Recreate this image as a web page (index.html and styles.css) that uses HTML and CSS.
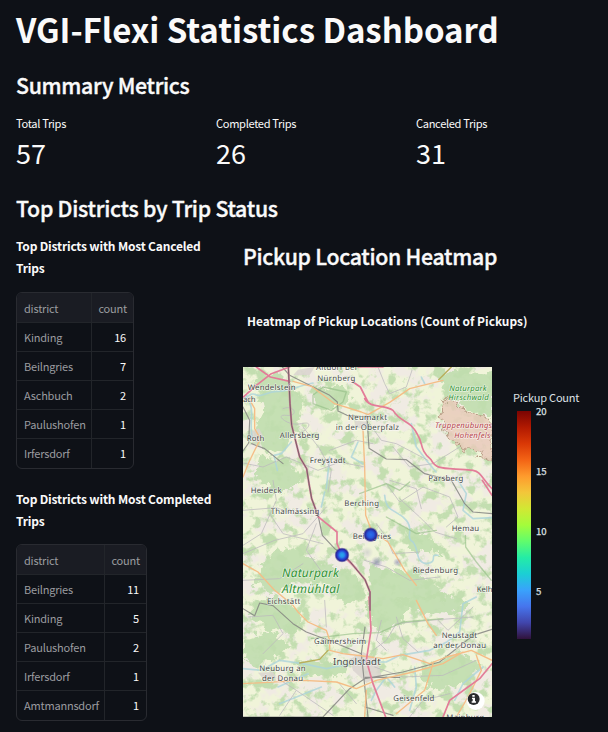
FILE: index.html
```html
<!DOCTYPE html>
<html lang="en">
<head>
<meta charset="utf-8">
<title>VGI-Flexi Statistics Dashboard</title>
<link rel="stylesheet" href="styles.css">
</head>
<body>
<main class="dashboard">
  <h1>VGI-Flexi Statistics Dashboard</h1>
  <h2 class="summary-title">Summary Metrics</h2>
  <section class="metrics">
    <div><div class="metric-label">Total Trips</div><div class="metric-value">57</div></div>
    <div><div class="metric-label">Completed Trips</div><div class="metric-value">26</div></div>
    <div><div class="metric-label">Canceled Trips</div><div class="metric-value">31</div></div>
  </section>
  <h2 class="district-title">Top Districts by Trip Status</h2>
  <div class="columns">
    <section class="tables">
      <h3>Top Districts with Most Canceled<br>Trips</h3>
      <div class="table canceled">
        <div class="row head"><span>district</span><span>count</span></div>
        <div class="row"><span>Kinding</span><span>16</span></div>
        <div class="row"><span>Beilngries</span><span>7</span></div>
        <div class="row"><span>Aschbuch</span><span>2</span></div>
        <div class="row"><span>Paulushofen</span><span>1</span></div>
        <div class="row"><span>Irfersdorf</span><span>1</span></div>
      </div>
      <h3 class="completed-title">Top Districts with Most Completed<br>Trips</h3>
      <div class="table completed">
        <div class="row head"><span>district</span><span>count</span></div>
        <div class="row"><span>Beilngries</span><span>11</span></div>
        <div class="row"><span>Kinding</span><span>5</span></div>
        <div class="row"><span>Paulushofen</span><span>2</span></div>
        <div class="row"><span>Irfersdorf</span><span>1</span></div>
        <div class="row"><span>Amtmannsdorf</span><span>1</span></div>
      </div>
    </section>
    <section class="heatmap">
      <h2 class="heatmap-title">Pickup Location Heatmap</h2>
      <div class="chart-title">Heatmap of Pickup Locations (Count of Pickups)</div>
      <div class="chart">
        <svg class="map" viewBox="0 0 747 1050">
          <defs>
            <filter id="woods" x="0" y="0" width="100%" height="100%" color-interpolation-filters="sRGB">
              <feTurbulence type="fractalNoise" baseFrequency="0.03" numOctaves="4" seed="8"/>
              <feColorMatrix values="0 0 0 0 .765  0 0 0 0 .87  0 0 0 0 .69  6 0 0 0 -3.05"/>
            </filter>
            <filter id="fields" x="0" y="0" width="100%" height="100%" color-interpolation-filters="sRGB">
              <feTurbulence type="fractalNoise" baseFrequency="0.016" numOctaves="4" seed="31"/>
              <feColorMatrix values="0 0 0 0 .94  0 0 0 0 .92  0 0 0 0 .89  8 0 0 0 -3.8"/>
            </filter>
            <filter id="rough" x="-10%" y="-10%" width="120%" height="120%">
              <feTurbulence type="fractalNoise" baseFrequency="0.045" numOctaves="3" seed="4"/>
              <feDisplacementMap in="SourceGraphic" scale="42" xChannelSelector="R" yChannelSelector="G"/>
            </filter>
            <radialGradient id="hot"><stop offset="0" stop-color="#28a8ef"/><stop offset=".3" stop-color="#288eea"/><stop offset=".55" stop-color="#2646d8"/><stop offset=".78" stop-color="#292799"/><stop offset="1" stop-color="#302080" stop-opacity="0"/></radialGradient>
            <radialGradient id="warm"><stop offset="0" stop-color="#2c70ea"/><stop offset=".4" stop-color="#2859df"/><stop offset=".75" stop-color="#292999"/><stop offset="1" stop-color="#302080" stop-opacity="0"/></radialGradient>
            <radialGradient id="faint"><stop offset="0" stop-color="#6860a8" stop-opacity=".5"/><stop offset="1" stop-color="#6860a8" stop-opacity="0"/></radialGradient>
          </defs>
          <rect width="747" height="1050" fill="#f0f4d9"/>
          <rect width="747" height="1050" filter="url(#fields)"/>
          <rect width="747" height="1050" filter="url(#woods)"/>
          <g class="forest" filter="url(#rough)">
            <path d="M35 35L110 20 180 90 165 175 125 250 70 260 30 200 65 130Z"/>
            <path d="M55 265L140 280 175 340 110 380 35 330Z"/>
            <path d="M205 70L300 60 330 100 265 130 210 120Z"/>
            <path d="M595 10L750 20V150L690 140 600 80Z"/>
            <path d="M80 560L145 535 220 580 340 625 365 690 305 715 255 655 165 640 105 680 35 655Z"/>
            <path d="M35 700L115 690 180 735 155 800 75 790 20 745Z"/>
            <path d="M5 815L80 790 145 835 100 870 40 900 0 880Z"/>
            <path d="M385 595L480 615 585 650 610 700 510 690 475 770 405 800 370 745Z"/>
            <path d="M560 890L655 855 715 900 670 950 565 965 525 930Z"/>
            <path d="M150 883L265 885 330 900 275 930 190 925Z"/>
            <path d="M480 480L550 500 610 560 500 550Z"/>
            <path d="M455 695L600 680 690 700 650 735 540 745Z"/>
          </g>
          <g filter="url(#rough)"><path d="M606 92L642 115 680 140 750 162V280L655 240 610 207 595 150Z" fill="#e9c9b9" fill-opacity=".8" stroke="#b59b83" stroke-width="3"/></g>
          <g class="towns"><path d="M22 194L48 184 60 206 42 228 22 216Z"/><path d="M335 160L372 165 375 182 335 184Z"/><path d="M320 877L360 855 403 880 415 925 370 948 330 910Z"/><path d="M165 8L215 0 200 24 150 25Z"/><path d="M45 917L90 915 100 932 65 940Z"/></g>
          <g class="water">
            <path d="M0 96C18 88 25 75 40 84S70 72 105 73 150 60 210 48 M10 85C40 125 15 170 29 215 M145 225L115 260 93 265 103 310 M245 375L235 420 M260 270L250 365 M345 225L325 270 359 290 M505 170L520 240 550 280 579 315"/>
            <path d="M425 385C430 440 460 425 490 460 515 490 485 510 510 525 530 550 515 585 550 590 590 585 555 560 585 565 590 600 555 612 M500 405L520 430 499 485 M235 610L280 570 336 550 375 530 410 532 460 540 M0 705L45 720 60 704 150 680 170 655 250 640 M610 600L650 635 720 650"/>
            <path d="M0 905L55 910 110 880 180 890 250 905 350 885 430 885 470 865 560 850 610 826 650 795 660 710 700 690 M105 960L195 920M110 1010L235 960M515 900L520 960 500 1030M635 1000L660 950 720 900"/>
            <path d="M385 1000L400 970 430 930 455 960 M645 340L670 380 660 430 690 455 747 452 M535 30L545 50"/>
          </g>
          <g class="minor">
            <path d="M0 288L60 300 130 270 225 310 290 285 365 300 M180 180L230 245 265 310 255 375 M405 0L425 50 440 80 490 60 507 10 M380 170L415 220 460 230 555 280 M0 430L100 422 150 440 215 438 M90 340L100 400 55 500 0 535"/>
            <path d="M260 250L340 220 390 230 M450 240L500 300 570 290 650 240 M430 350L470 405 540 360 620 390 645 450 610 480 M470 395L530 450 575 495 640 515 M400 470L430 510 450 560 530 555"/>
            <path d="M0 560L95 520 180 500 250 420 M80 440L120 500 240 530 M220 470L190 550 240 620 M365 580L430 600 500 640 590 630 M440 340L520 365 535 425 M0 640L110 635 180 590 M245 700L250 780 M110 1045L160 970 105 935M160 970L270 1045M285 945L340 1010"/>
            <path d="M15 750L90 745 120 800 60 860M390 850L430 820 460 770 560 760 690 750M460 750L480 815 525 855M395 900L480 930 600 925 700 880M585 760L615 790 690 720M500 1050L540 1000 620 980M415 760L400 820 430 850M120 125C155 110 170 150 130 145S135 180 175 170 195 190 170 198"/>
          </g>
          <g class="green-line"><path d="M350 380L430 350 470 370 500 345 M430 450L520 500 580 490 M210 85L240 60 310 75 300 105 265 130 210 110Z M205 815L330 800 410 797 480 765 600 755 M667 505L668 540 700 585 745 640"/></g>
          <g class="rail">
            <path d="M118 0L140 25 260 85 283 105 285 132 312 145 372 150 378 244 430 276 490 278 545 320 625 340 665 410 690 435 747 440"/>
            <path d="M0 120L20 160 17 228 0 252M26 230L65 245 120 290M0 725L35 746 50 708 90 716 150 770 190 795 270 825 355 860 375 1050M355 860L366 780"/>
            <path d="M0 1050L240 1050 320 965 365 935 480 915 590 885 690 805 747 787M366 931H470M366 1020L450 1045M226 449L238 505 275 545 300 560"/>
          </g>
          <g class="secondary">
            <path d="M18 95L35 125 35 185 52 215 18 285 0 330M150 43L205 58 275 110 355 135 375 143 440 106 500 65 600 40 M360 190L365 300 368 445 385 490 435 525 485 610 520 655"/>
            <path d="M0 590L45 615 95 670 150 715 165 735 195 765 250 790 260 820 260 850 300 860 360 867 420 875 480 863 560 890 610 870 685 850 747 880M0 950L180 940 280 945 340 965 400 940 510 915 600 890 660 855M520 700L555 770 580 805M570 890L545 970 460 1040M370 970L365 1050M700 865L715 910 675 990 640 1050"/>
          </g>
          <path class="road-yellow" d="M170 888L230 877 255 850M587 38L625 0"/>
          <g class="primary">
            <path d="M0 91L40 55 85 20 140 0M40 0L82 30 140 43M330 45L352 60 375 105M345 0H420M365 95C380 125 425 112 450 130 475 170 500 155 525 205 540 230 530 250 564 278 580 310 600 302 690 310 715 314 720 340 747 365M225 449L250 469 282 495 282 530 297 564 340 605"/>
            <path d="M378 690L384 790 370 880 390 950 428 1050M600 1050L620 1000 675 960 710 935 747 890M718 340L747 385"/>
          </g>
          <path class="motorway" d="M136 0L141 110 146 175 170 270 191 305 198 350 206 395 226 449M297 560L321 584 366 638 381 675V730"/>
          <path class="motorway-core" d="M136 0L141 110 146 175 170 270 191 305 198 350 206 395 226 449M297 560L321 584 366 638 381 675V730"/>
          <g class="labels">
            <text x="219" y="10" textLength="122">Altdorf bei</text><text x="223" y="42" textLength="114">Nürnberg</text>
            <text x="14" y="68" textLength="144">Wendelstein</text><text x="0" y="106" textLength="38">ach</text>
            <text x="11" y="221" textLength="53">Roth</text><text x="110" y="214" textLength="119">Allersberg</text><text x="200" y="288" textLength="108">Freystadt</text>
            <text x="315" y="158" textLength="117">Neumarkt</text><text x="278" y="189" textLength="190">in der Oberpfalz</text><text x="556" y="342" textLength="105">Parsberg</text>
            <text x="23" y="379" textLength="93">Heideck</text><text x="83" y="442" textLength="146">Thalmässing</text><text x="304" y="417" textLength="104">Berching</text><text x="329" y="515" textLength="115">Beilngries</text>
            <text x="72" y="712" textLength="100">Eichstätt</text><text x="626" y="492" textLength="82">Hemau</text><text x="509" y="617" textLength="136">Riedenburg</text><text x="701" y="676" textLength="48">Kelh</text>
            <text x="213" y="830" textLength="156">Gaimersheim</text><text class="city" x="270" y="893" textLength="143">Ingolstadt</text><text x="49" y="913" textLength="139">Neuburg an</text><text x="57" y="943" textLength="123">der Donau</text>
            <text x="596" y="812" textLength="106">Neustadt</text><text x="571" y="844" textLength="158">an der Donau</text><text x="451" y="1001" textLength="123">Geisenfeld</text><text x="610" y="1059" textLength="113">Mainburg</text>
          </g>
          <g class="labels nature"><text x="619" y="71" textLength="112">Naturpark</text><text x="616" y="100" textLength="121">Hirschwald</text><text class="large" x="117" y="631" textLength="171">Naturpark</text><text class="large" x="117" y="677" textLength="172">Altmühltal</text></g>
          <g class="labels military"><text x="576" y="183" textLength="171">Truppenübungs</text><text x="634" y="212" textLength="108">Hohenfels</text></g>
          <circle cx="297" cy="564" r="23" fill="url(#hot)"/><circle cx="383" cy="503" r="23" fill="url(#warm)"/>
          <circle cx="401" cy="585" r="18" fill="url(#faint)"/><circle cx="463" cy="586" r="13" fill="url(#faint)"/><circle cx="373" cy="556" r="18" fill="url(#faint)" opacity=".4"/>
          <circle cx="698" cy="1002" r="27" fill="#fff"/><circle cx="692" cy="996" r="18" fill="#292b2d"/><path d="M687 992h9v11h3v4h-13v-4h3v-7h-2zM688 984h7v5h-7z" fill="#fff"/>
        </svg>
        <div class="legend">
          <div class="legend-title">Pickup Count</div>
          <div class="scale"><div class="colorbar"></div><div class="ticks"><span>20</span><span>15</span><span>10</span><span>5</span></div></div>
        </div>
      </div>
    </section>
  </div>
</main>
</body>
</html>
```
FILE: styles.css
```css
* { box-sizing: border-box; }
body { margin: 0; background: #0e1117; color: #fafafa; font-family: "Noto Sans CJK JP", "Noto Sans", sans-serif; overflow: hidden; }
.dashboard { width: 608px; height: 732px; padding: 9px 16px 0; overflow: hidden; }
h1, h2, h3 { margin: 0; white-space: nowrap; }
h1 { font-size: 33px; line-height: 40px; font-weight: 700; letter-spacing: -.05px; }
h2 { font-size: 21.3px; line-height: 30px; font-weight: 500; letter-spacing: -.31px; -webkit-text-stroke: .35px currentColor; }
.summary-title { margin-top: 21px; }
.metrics { display: grid; grid-template-columns: 200px 200px 1fr; margin-top: 13px; }
.metric-label { font-size: 11.1px; line-height: 20px; letter-spacing: -.33px; }
.metric-value { font-size: 27px; line-height: 38px; padding-top: 1px; }
.district-title { margin-top: 21px; letter-spacing: -.27px; }
.columns { display: flex; }
.tables { width: 227px; flex: none; padding-top: 12px; }
h3 { font-size: 12px; line-height: 21.5px; font-weight: 700; letter-spacing: -.19px; }
.table { width: 118px; height: 177px; border: 1px solid #292b31; border-radius: 6px; overflow: hidden; margin-top: 14px; }
.table.completed { width: 131px; margin-top: 13px; }
.completed-title { margin-top: 19px; }
.row { display: grid; grid-template-columns: minmax(0, 1fr) 42px; height: 29px; border-bottom: 1px solid #22252a; font-size: 11px; line-height: 28px; letter-spacing: -.2px; white-space: nowrap; }
.row:last-child { border-bottom: 0; }
.row span { padding: 0 0 0 7px; color: #9b9ca0; }
.row span:last-child { border-left: 1px solid #22252a; padding: 0 7px; color: #fafafa; text-align: right; }
.row.head { height: 30px; line-height: 30px; background: #1a1c23; }
.row.head span:last-child { color: #9b9ca0; padding: 0 6px; }
.heatmap { width: 349px; flex: none; }
.heatmap-title { margin-top: 18px; letter-spacing: -.3px; }
.chart-title { margin: 40px 0 0 4px; font-size: 11.9px; line-height: 20px; font-weight: 700; white-space: nowrap; }
.chart { display: flex; margin-top: 36px; }
.map { width: 249px; height: 350px; display: block; flex: none; }
.forest { fill: #bfddad; fill-opacity: .88; }
.towns { fill: #d9d4cf; fill-opacity: .85; }
.water, .minor, .rail, .secondary, .primary, .green-line, .motorway, .motorway-core, .road-yellow { fill: none; stroke-linejoin: round; stroke-linecap: round; }
.water { stroke: #add5db; stroke-width: 5; opacity: .8; }
.minor { stroke: #bcb9bd; stroke-width: 3; opacity: .75; }
.green-line { stroke: #91bd83; stroke-width: 4; opacity: .6; }
.rail { stroke: #858582; stroke-width: 3.5; opacity: .85; }
.secondary { stroke: #f5bd86; stroke-width: 4; }
.road-yellow { stroke: #b8ae5a; stroke-width: 4; }
.primary { stroke: #e37c98; stroke-width: 5; }
.motorway { stroke: #ce8298; stroke-width: 6; }
.motorway-core { stroke: #786069; stroke-width: 3; }
.labels { font-family: "Noto Sans", sans-serif; font-size: 23.5px; fill: #484b48; stroke: #fff; stroke-opacity: .6; stroke-width: 4; paint-order: stroke; stroke-linejoin: round; text-rendering: geometricPrecision; }
.labels text { white-space: pre; }
.labels .city { font-size: 29px; }
.nature { fill: #329335; font-style: italic; }
.labels .large { font-size: 36px; }
.military { fill: #b7464c; font-style: italic; }
.legend { width: 80px; margin: 20px 0 0 21px; color: #dfe1e6; }
.legend-title { font-size: 11px; line-height: 20px; letter-spacing: -.2px; white-space: nowrap; }
.scale { display: flex; margin: 4px 0 0 4px; }
.colorbar { width: 14px; height: 228px; background: linear-gradient(to top, #30123b, #4145ab 7.1%, #4675ed 14.3%, #39a2fc 21.4%, #1bcfd4 28.6%, #24eca6 35.7%, #61fc6c 42.9%, #a4fc3b 50%, #d1e834 57.1%, #f3c63a 64.3%, #fe9b2d 71.4%, #f36315 78.6%, #d93806 85.7%, #b11901 92.9%, #7a0402); }
.ticks { display: flex; flex-direction: column; gap: 40px; margin: -10px 0 0 5px; font-size: 9.6px; line-height: 20px; -webkit-text-stroke: .25px currentColor; }
```
